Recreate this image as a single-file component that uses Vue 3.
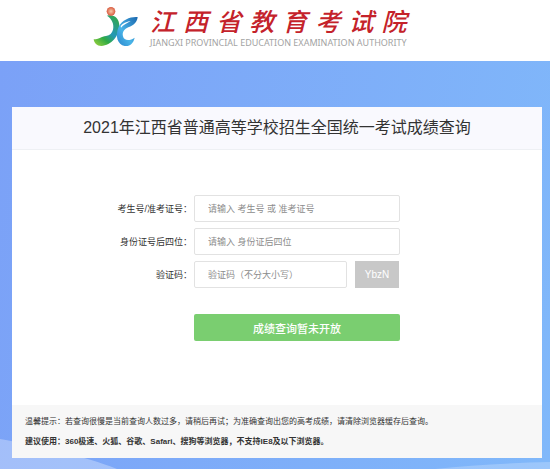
<template>
  <div class="page">
    <header class="header">
      <svg class="emblem" viewBox="0 0 162 144" aria-hidden="true">
        <defs>
          <linearGradient id="leaf" x1="0" y1="1" x2="0.7" y2="0">
            <stop offset="0" stop-color="#a4d53c" />
            <stop offset="0.35" stop-color="#2faa45" />
            <stop offset="0.6" stop-color="#2497b8" />
            <stop offset="1" stop-color="#2fa558" />
          </linearGradient>
          <linearGradient id="wave" x1="1" y1="0" x2="0" y2="1">
            <stop offset="0" stop-color="#1b67ae" />
            <stop offset="0.6" stop-color="#48b4e8" />
            <stop offset="1" stop-color="#2a83ca" />
          </linearGradient>
          <radialGradient id="ball">
            <stop offset="0" stop-color="#f8c9a8" />
            <stop offset="1" stop-color="#d95b40" />
          </radialGradient>
        </defs>
        <path fill="url(#leaf)" d="M57 35C76 29 94 42 94 64C94 96 70 125 40 126C26 126 19 118 17 106C32 106 40 98 54 96C66 94 72 87 75 77C79 60 72 45 57 35Z" />
        <path fill="url(#wave)" d="M149 39C130 37 102 46 92 68C80 96 89 122 110 126C127 128 136 117 140 101C126 111 108 111 105 97C102 84 109 75 121 70C138 63 147 55 149 39Z" />
        <path fill="#fff" d="M98 66C103 59 116 53 128 51C115 58 106 63 99 71Z" />
        <circle cx="69" cy="22" r="13" fill="url(#ball)" />
      </svg>
      <div class="brand">
        <div class="brand-name">
          <span v-for="char in brandName" :key="char">{{ char }}</span>
        </div>
        <div class="brand-sub">JIANGXI PROVINCIAL EDUCATION EXAMINATION AUTHORITY</div>
      </div>
    </header>

    <main class="main">
      <svg class="waves" viewBox="0 0 550 50" preserveAspectRatio="none" aria-hidden="true">
        <path fill="#fff" fill-opacity="0.3" d="M0 20C30 25 85 37 117 50L0 50Z" />
        <path fill="#fff" fill-opacity="0.22" d="M435 50C470 46 510 44 550 43L550 50Z" />
      </svg>
      <section class="card">
        <h1 class="title">2021年江西省普通高等学校招生全国统一考试成绩查询</h1>

        <form class="form" @submit.prevent>
          <label for="examinee">考生号/准考证号：</label>
          <input id="examinee" v-model="examinee" class="field" type="text"
                 placeholder="请输入 考生号 或 准考证号">

          <label for="idcard">身份证号后四位：</label>
          <input id="idcard" v-model="idcard" class="field" type="text" maxlength="4"
                 placeholder="请输入 身份证后四位">

          <label for="captcha">验证码：</label>
          <div class="captcha">
            <input id="captcha" v-model="captcha" class="field" type="text"
                   placeholder="验证码（不分大小写）">
            <button class="captcha-code" type="button">YbzN</button>
          </div>

          <button class="submit" type="submit">成绩查询暂未开放</button>
        </form>

        <footer class="tips">
          <p>温馨提示：若查询很慢是当前查询人数过多，请稍后再试；为准确查询出您的高考成绩，请清除浏览器缓存后查询。</p>
          <p class="strong">建议使用：360极速、火狐、谷歌、Safari、搜狗等浏览器，不支持IE8及以下浏览器。</p>
        </footer>
      </section>
    </main>
  </div>
</template>

<script setup>
  import { ref } from 'vue';

  const brandName = [...'江西省教育考试院'];

  const examinee = ref('');
  const idcard = ref('');
  const captcha = ref('');
</script>

<style>
body {
  margin: 0;
}
</style>

<style scoped>
.page {
  display: flex;
  flex-direction: column;
  min-height: 100vh;
  font-family: "Liberation Sans", "Noto Sans CJK SC", sans-serif;
  color: #333;
}

.header {
  display: flex;
  align-items: flex-start;
  box-sizing: border-box;
  height: 61px;
  padding: 4px 88px;
  background: #fff;
}

.emblem {
  flex: none;
  width: 54px;
  height: 48px;
}

.brand {
  padding: 4px 0 0 8px;
}

.brand-name {
  display: flex;
  justify-content: space-between;
  font-size: 25px;
  font-weight: 500;
  font-style: italic;
  line-height: 29px;
  color: #c4222a;
}

.brand-sub {
  font-family: "Noto Sans", sans-serif;
  font-size: 9px;
  line-height: 12px;
  white-space: nowrap;
  color: #a3a3a3;
}

.main {
  position: relative;
  flex: 1;
  padding: 46px 8px 11px 12px;
  background: linear-gradient(100deg, #7ba1f7, #80b8fa);
}

.waves {
  position: absolute;
  left: 0;
  bottom: 0;
  width: 100%;
  height: 50px;
}

.card {
  position: relative;
  background: #fff;
}

.title {
  margin: 0;
  border-bottom: 1px solid #eef0f4;
  background: #f9f9fe;
  font-size: 16px;
  font-weight: 400;
  line-height: 42px;
  text-align: center;
}

.form {
  display: grid;
  grid-template-columns: 180fr 206fr 140fr;
  gap: 6px 2px;
  align-items: center;
  padding: 45px 0 64px;
  font-size: 9px;
}

.form label {
  grid-column: 1;
  text-align: right;
}

.field {
  box-sizing: border-box;
  width: 100%;
  min-width: 0;
  height: 27px;
  padding: 0 13px;
  border: 1px solid #e2e2e2;
  border-radius: 2px;
  outline: none;
  background: #fff;
  font: inherit;
  color: inherit;
}

.field:focus {
  border-color: #7ccd72;
}

.field::placeholder {
  color: #8c8c8c;
}

.captcha {
  display: flex;
  gap: 8px;
}

.captcha .field {
  flex: 1;
}

.captcha-code {
  flex: none;
  width: 44px;
  height: 27px;
  margin-right: 1px;
  padding: 0;
  border: 0;
  background: #c8c8c8;
  font: inherit;
  font-size: 10px;
  color: #fff;
  cursor: pointer;
}

.submit {
  grid-column: 2;
  height: 27px;
  margin-top: 20px;
  padding: 0;
  border: 0;
  border-radius: 2px;
  background: #7ace70;
  font: inherit;
  font-size: 11px;
  font-weight: 500;
  color: #fff;
  cursor: pointer;
}

.tips {
  padding: 7px 13px 6px;
  background: #f7f7f7;
  font-size: 8px;
  line-height: 20px;
}

.tips p {
  margin: 0;
}

.tips .strong {
  font-weight: 700;
}
</style>
